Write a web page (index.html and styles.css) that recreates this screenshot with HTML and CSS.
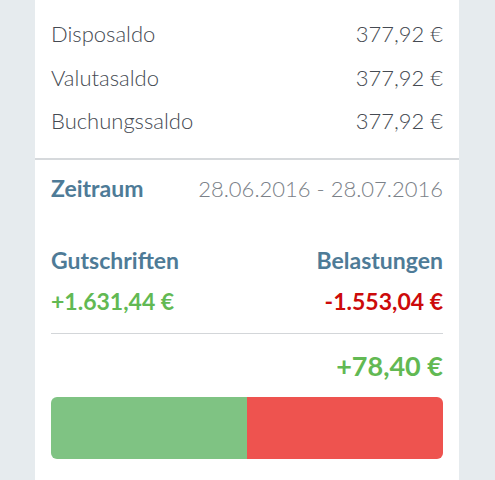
FILE: index.html
```html
<!DOCTYPE html>
<html lang="de">
<head>
    <meta charset="UTF-8">
    <meta name="viewport" content="width=device-width, initial-scale=1.0">
    <title>Umsätze</title>
    <link rel="stylesheet" href="styles.css">
</head>
<body>
    <div class="card">
        <div class="saldo-list">
            <div class="saldo-row"><span>Disposaldo</span><span>377,92 €</span></div>
            <div class="saldo-row"><span>Valutasaldo</span><span>377,92 €</span></div>
            <div class="saldo-row"><span>Buchungssaldo</span><span>377,92 €</span></div>
        </div>
        <div class="period">
            <div class="period-row">
                <span class="heading">Zeitraum</span>
                <span class="dates">28.06.2016 - 28.07.2016</span>
            </div>
            <div class="totals">
                <div class="total">
                    <span class="heading">Gutschriften</span>
                    <span class="amount plus">+1.631,44 €</span>
                </div>
                <div class="total right">
                    <span class="heading">Belastungen</span>
                    <span class="amount minus">-1.553,04 €</span>
                </div>
            </div>
            <div class="balance">+78,40 €</div>
            <div class="bar">
                <div class="bar-credit" style="width: 50%"></div>
                <div class="bar-debit"></div>
            </div>
        </div>
    </div>
</body>
</html>
```

FILE: styles.css
```css
body {
    margin: 0;
    background-color: #e6ebee;
    font-family: Lato, "Noto Sans", sans-serif;
}
.card {
    margin: 0 36px 0 35px;
    background-color: #fff;
    min-height: 480px;
}
.saldo-list {
    padding: 12px 16px 15px;
    border-bottom: 2px solid #d6d9dc;
}
.saldo-row {
    display: flex;
    justify-content: space-between;
    height: 43.5px;
    line-height: 43.5px;
    font-size: 22px;
    font-weight: 300;
    color: #454a52;
}
.period {
    padding: 14px 16px 20px;
}
.period-row {
    display: flex;
    justify-content: space-between;
    align-items: baseline;
}
.heading {
    font-weight: bold;
    font-size: 23px;
    color: #4e7b97;
}
.dates {
    font-size: 22px;
    font-weight: 300;
    color: #7b8188;
}
.totals {
    display: flex;
    justify-content: space-between;
    margin-top: 44px;
    padding-bottom: 18px;
    border-bottom: 1px solid #d3d6d9;
}
.total {
    display: flex;
    flex-direction: column;
    gap: 13px;
}
.total.right {
    align-items: flex-end;
}
.amount {
    font-weight: bold;
    font-size: 23px;
}
.plus {
    color: #62b953;
}
.minus {
    color: #cc0a0a;
}
.balance {
    text-align: right;
    font-size: 27px;
    font-weight: bold;
    color: #62b953;
    margin-top: 15px;
}
.bar {
    display: flex;
    height: 62px;
    margin-top: 15px;
    border-radius: 6px;
    overflow: hidden;
}
.bar-credit {
    background-color: #7fc383;
}
.bar-debit {
    flex: 1;
    background-color: #ee534f;
}
```
